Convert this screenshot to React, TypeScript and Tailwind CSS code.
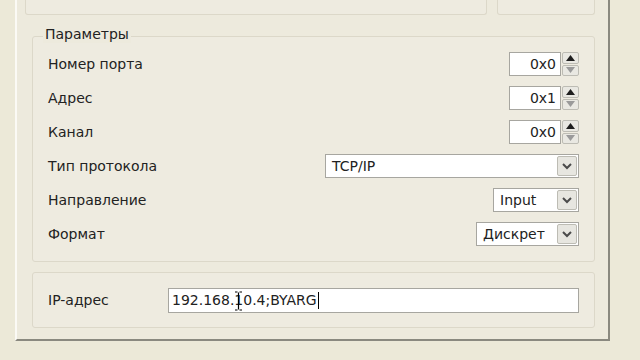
import React from 'react';

const SpinBox = ({ value }: { value: string }) => (
  <div className="flex h-[24px] items-stretch">
    <div className="flex w-[52px] items-center justify-end border border-[#a7a6a0] bg-white pr-[4px] text-[14px] text-[#222]">
      {value}
    </div>
    <div className="ml-[1px] flex w-[17px] flex-col gap-[1px]">
      <div className="flex flex-1 items-center justify-center rounded-[2px] border border-[#bdbcb4] bg-[#e9e8e2]">
        <svg width="9" height="6" viewBox="0 0 9 6">
          <path d="M0 6 L4.5 0 L9 6 Z" fill="#1e1e1e" />
        </svg>
      </div>
      <div className="flex flex-1 items-center justify-center rounded-[2px] border border-[#bdbcb4] bg-[#e9e8e2]">
        <svg width="9" height="6" viewBox="0 0 9 6">
          <path d="M0 0 L4.5 6 L9 0 Z" fill="#9a9a9a" />
        </svg>
      </div>
    </div>
  </div>
);

const Combo = ({ value, width }: { value: string; width: string }) => (
  <div className={`flex h-[24px] items-stretch border border-[#a7a6a0] bg-white ${width}`}>
    <div className="flex flex-1 items-center pl-[6px] text-[14px] text-[#222]">{value}</div>
    <div className="m-[1px] flex w-[20px] items-center justify-center rounded-[2px] border border-[#bdbcb4] bg-[#e7e6e0]">
      <svg width="10" height="7" viewBox="0 0 10 7">
        <path d="M1 1 L5 5 L9 1" stroke="#4b4b4b" strokeWidth="2" fill="none" />
      </svg>
    </div>
  </div>
);

const Row = ({ label, children }: { label: string; children: React.ReactNode }) => (
  <div className="flex h-[34px] items-center justify-between">
    <span className="text-[14px] text-[#222]">{label}</span>
    {children}
  </div>
);

export default function App() {
  return (
    <div
      className="h-[360px] w-[640px] overflow-hidden bg-[#ece9d8]"
      style={{ fontFamily: '"DejaVu Sans", Tahoma, sans-serif' }}
    >
      <div className="ml-[15px] flex h-[341px] w-[595px] flex-col border-b-2 border-l-2 border-r-2 border-b-[#8a897f] border-l-[#fbfaf5] border-r-[#8a897f] bg-[#edeadd] pl-[8px]">
        {/* top boxes, cut by the window edge */}
        <div className="flex gap-[10px]">
          <div className="h-[15px] w-[462px] rounded-b-[3px] border-x border-b border-[#dcd8c9] bg-[#eeebe0]" />
          <div className="h-[15px] w-[98px] rounded-b-[3px] border-x border-b border-[#dcd8c9] bg-[#eeebe0]" />
        </div>

        {/* Параметры */}
        <div className="relative ml-[7px] mt-[21px] w-[563px] rounded-[3px] border border-[#dcd8c9] bg-[#eeebe0] pb-[10px] pl-[15px] pr-[15px] pt-[10px]">
          <span className="absolute left-[10px] top-[-12px] bg-[#edeadd] px-[2px] text-[14px] leading-[18px] text-[#222]">
            Параметры
          </span>
          <Row label="Номер порта">
            <SpinBox value="0x0" />
          </Row>
          <Row label="Адрес">
            <SpinBox value="0x1" />
          </Row>
          <Row label="Канал">
            <SpinBox value="0x0" />
          </Row>
          <Row label="Тип протокола">
            <Combo value="TCP/IP" width="w-[254px]" />
          </Row>
          <Row label="Направление">
            <Combo value="Input" width="w-[86px]" />
          </Row>
          <Row label="Формат">
            <Combo value="Дискрет" width="w-[103px]" />
          </Row>
        </div>

        {/* IP-адрес */}
        <div className="ml-[7px] mt-[10px] flex h-[56px] w-[563px] items-center rounded-[3px] border border-[#dcd8c9] bg-[#eeebe0] pl-[15px] pr-[15px]">
          <span className="w-[120px] text-[14px] text-[#222]">IP-адрес</span>
          <div className="relative flex h-[25px] flex-1 items-center border border-[#a7a6a0] bg-white pl-[3px] text-[14px] text-[#222]">
            <span>192.168.10.4;BYARG</span>
            <span className="ml-[1px] h-[17px] w-[1px] bg-black" />
            <svg className="absolute left-[66px] top-[2px]" width="7" height="20" viewBox="0 0 7 20">
              <path d="M0 1 H2.5 M4.5 1 H7 M3.5 1.5 V18.5 M0 19 H2.5 M4.5 19 H7" stroke="#000" strokeWidth="1.2" fill="none" />
            </svg>
          </div>
        </div>
      </div>
    </div>
  );
}
